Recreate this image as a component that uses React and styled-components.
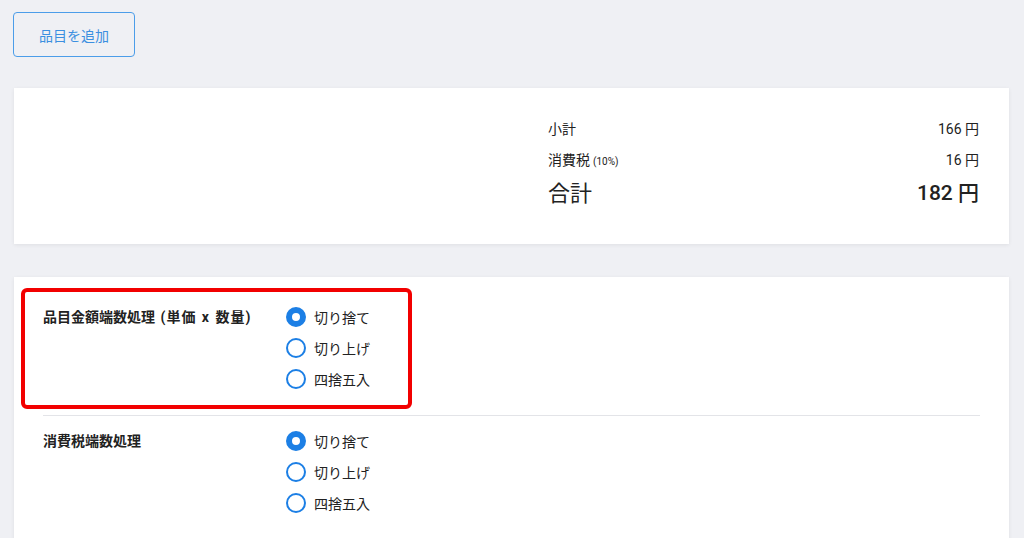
import React from "react";
import styled, { createGlobalStyle } from "styled-components";

const Global = createGlobalStyle`
  html, body { margin: 0; padding: 0; }
  body {
    background: #eff0f4;
    font-family: Roboto, "Noto Sans CJK JP", "Noto Sans", sans-serif;
    color: #222;
  }
`;

const Page = styled.div`
  padding: 12px 15px 0 14px;
  display: flex;
  flex-direction: column;
  height: 526px;
  overflow: hidden;
  & > * { flex-shrink: 0; }
`;

const AddButton = styled.button`
  align-self: flex-start;
  margin-left: -1px;
  width: 122px;
  height: 45px;
  border: 1px solid #4b9de9;
  border-radius: 4px;
  background: transparent;
  color: #3b8fe0;
  font-family: inherit;
  font-size: 14px;
  cursor: pointer;
`;

const Card = styled.div`
  background: #fff;
  box-shadow: 0 1px 4px rgba(0, 0, 0, 0.07);
  margin-top: ${(p) => p.$mt}px;
  position: relative;
`;

const SummaryCard = styled(Card)`
  height: 156px;
  display: flex;
  justify-content: flex-end;
  padding: 24px 30px 0 0;
  box-sizing: border-box;
`;

const Summary = styled.div`
  width: 431px;
  display: flex;
  flex-direction: column;
`;

const SumRow = styled.div`
  display: flex;
  justify-content: space-between;
  align-items: center;
  height: ${(p) => (p.$big ? 34 : 31)}px;
  font-size: ${(p) => (p.$big ? 22 : 14)}px;
  color: #222;
`;

const Value = styled.span`
  font-size: 14px;
`;

const Small = styled.span`
  font-size: 10px;
  margin-left: 3px;
`;

const BigValue = styled.span`
  font-weight: 500;
  font-size: 21px;
`;

const SettingsCard = styled(Card)`
  padding: 0 29px;
  height: 300px;
`;

const SettingRow = styled.div`
  display: grid;
  grid-template-columns: 243px 1fr;
  padding: ${(p) => (p.$first ? "30px 0 26px" : "15px 0 0")};
  border-bottom: ${(p) => (p.$divider ? "1px solid #e3e4e8" : "none")};
`;

const Label = styled.div`
  font-size: 14px;
  font-weight: 700;
  line-height: 20px;
  color: #222;
`;

const Paren = styled.span`
  margin-left: 2px;
  word-spacing: 1px;
  letter-spacing: 1px;
`;

const Options = styled.div`
  display: flex;
  flex-direction: column;
  gap: 11px;
`;

const Option = styled.label`
  display: flex;
  align-items: center;
  gap: 8px;
  font-size: 14px;
  color: #222;
  height: 20px;
`;

const Circle = styled.span`
  width: 20px;
  height: 20px;
  box-sizing: border-box;
  border-radius: 50%;
  border: ${(p) => (p.$checked ? "6px" : "2px")} solid #1c7fe5;
  background: #fff;
  flex-shrink: 0;
`;

const Highlight = styled.div`
  position: absolute;
  left: 7px;
  top: 11px;
  width: 391px;
  height: 121px;
  box-sizing: border-box;
  border: 4px solid #f20000;
  border-radius: 6px;
  pointer-events: none;
`;

const choices = ["切り捨て", "切り上げ", "四捨五入"];

function RadioGroup({ value }) {
  return (
    <Options>
      {choices.map((c) => (
        <Option key={c}>
          <Circle $checked={c === value} />
          {c}
        </Option>
      ))}
    </Options>
  );
}

export default function App() {
  return (
    <>
      <Global />
      <Page>
        <AddButton>品目を追加</AddButton>
        <SummaryCard $mt={31}>
          <Summary>
            <SumRow>
              <span>小計</span>
              <Value>166 円</Value>
            </SumRow>
            <SumRow>
              <span>
                消費税<Small>(10%)</Small>
              </span>
              <Value>16 円</Value>
            </SumRow>
            <SumRow $big>
              <span>合計</span>
              <BigValue>182 円</BigValue>
            </SumRow>
          </Summary>
        </SummaryCard>
        <SettingsCard $mt={33}>
          <SettingRow $first $divider>
            <Label>
              品目金額端数処理 <Paren>(単価 x 数量)</Paren>
            </Label>
            <RadioGroup value="切り捨て" />
          </SettingRow>
          <SettingRow>
            <Label>消費税端数処理</Label>
            <RadioGroup value="切り捨て" />
          </SettingRow>
          <Highlight />
        </SettingsCard>
      </Page>
    </>
  );
}
